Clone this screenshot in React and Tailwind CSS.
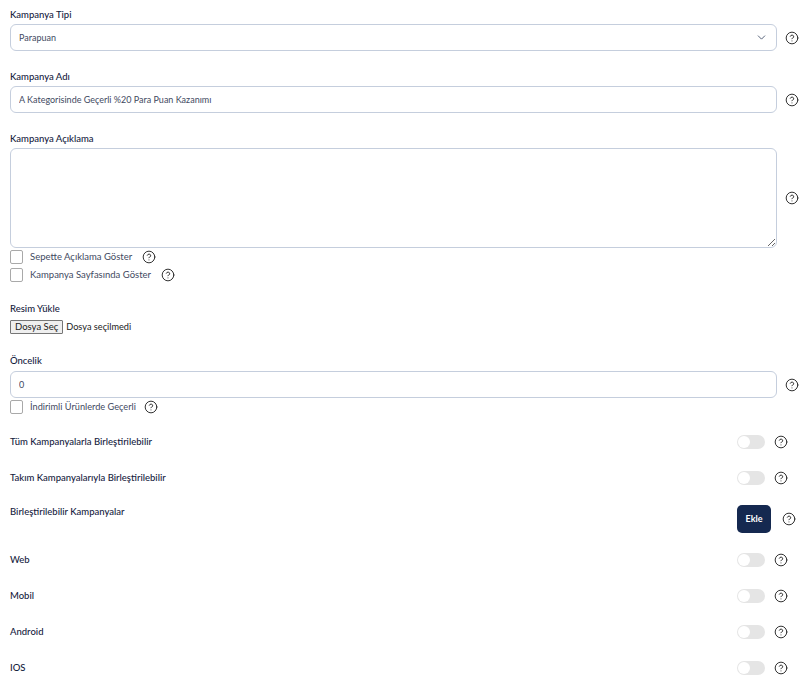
import { ChevronDown, CircleHelp } from "lucide-react";

const font = "font-['Lato','Noto_Sans',sans-serif]";

const Help = () => <CircleHelp size={14} strokeWidth={1.6} className="shrink-0 text-[#222]" />;

const Label = ({ children, className = "" }) => (
  <div className={`text-[9.5px] leading-[12px] font-medium text-[#14213d] ${className}`}>{children}</div>
);

const Check = ({ text, textClass = "text-[9.5px]", helpClass = "ml-[10px]" }) => (
  <label className="flex items-center h-[14px]">
    <span className="w-[13px] h-[14px] border border-[#a9a9a9] rounded-[2px] bg-white shrink-0" />
    <span className={`ml-[7px] text-[#3f4a5f] ${textClass}`}>{text}</span>
    <span className={`flex ${helpClass}`}><Help /></span>
  </label>
);

const Toggle = () => (
  <div className="w-[28px] h-[14px] rounded-full bg-[#e5e5e5] flex items-center p-[1px]">
    <div className="w-[12px] h-[12px] rounded-full bg-white" />
  </div>
);

const ToggleRow = ({ text, className = "" }) => (
  <div className={`flex items-center h-[14px] pr-[3px] ${className}`}>
    <Label className="flex-1">{text}</Label>
    <Toggle />
    <span className="ml-[9px] mr-[5px] flex"><Help /></span>
  </div>
);

const boxClass =
  "w-[767px] h-[27px] border border-[#c5cedd] rounded-[6px] px-2 text-[9px] text-[#3f4a5f] bg-white outline-none";

const App = () => {
  return (
    <div className={`${font} w-[807px] h-[682px] overflow-hidden bg-white pl-[10px] pt-[9px]`}>
      <Label>Kampanya Tipi</Label>
      <div className="flex items-center mt-[3px]">
        <div className={`${boxClass} flex items-center justify-between pr-[8px]`}>
          <span>Parapuan</span>
          <ChevronDown size={13} strokeWidth={1.5} className="text-[#33415c]" />
        </div>
        <span className="ml-[8px] flex"><Help /></span>
      </div>

      <Label className="mt-[20px]">Kampanya Adı</Label>
      <div className="flex items-center mt-[3px]">
        <input className={boxClass} defaultValue="A Kategorisinde Geçerli %20 Para Puan Kazanımı" />
        <span className="ml-[8px] flex"><Help /></span>
      </div>

      <Label className="mt-[20px]">Kampanya Açıklama</Label>
      <div className="flex items-center mt-[3px]">
        <textarea className="w-[767px] h-[100px] border border-[#c5cedd] rounded-[6px] px-2 py-1 text-[9px] bg-white outline-none block" />
        <span className="ml-[8px] flex"><Help /></span>
      </div>

      <div className="mt-[2px] flex flex-col gap-[4px]">
        <Check text="Sepette Açıklama Göster" />
        <Check text="Kampanya Sayfasında Göster" />
      </div>

      <Label className="mt-[21px]">Resim Yükle</Label>
      <div className="flex items-center mt-[5px] h-[14px]">
        <div className="h-[14px] px-[4px] border border-[#767676] rounded-[1px] bg-[#efefef] text-[9.5px] leading-[12px] text-[#222]">Dosya Seç</div>
        <span className="ml-[3px] text-[9.2px] text-[#222]">Dosya seçilmedi</span>
      </div>

      <Label className="mt-[21px]">Öncelik</Label>
      <div className="flex items-center mt-[4px]">
        <input className={boxClass} defaultValue="0" />
        <span className="ml-[8px] flex"><Help /></span>
      </div>

      <div className="mt-[2px]">
        <Check text="İndirimli Ürünlerde Geçerli" textClass="text-[9.2px]" helpClass="ml-[8px]" />
      </div>

      <div className="pr-[11px]">
        <ToggleRow text="Tüm Kampanyalarla Birleştirilebilir" className="mt-[21px]" />
        <ToggleRow text="Takım Kampanyalarıyla Birleştirilebilir" className="mt-[22px]" />

        <div className="flex items-start mt-[20px] h-[28px]">
          <Label className="flex-1 mt-[1px]">Birleştirilebilir Kampanyalar</Label>
          <div className="flex items-center">
            <button className="w-[34px] h-[28px] rounded-[5px] bg-[#152950] text-white text-[9px] font-bold">Ekle</button>
            <span className="ml-[11px] flex"><Help /></span>
          </div>
        </div>

        <ToggleRow text="Web" className="mt-[20px]" />
        <ToggleRow text="Mobil" className="mt-[22px]" />
        <ToggleRow text="Android" className="mt-[22px]" />
        <ToggleRow text="IOS" className="mt-[22px]" />
      </div>
    </div>
  );
};

export default App;
